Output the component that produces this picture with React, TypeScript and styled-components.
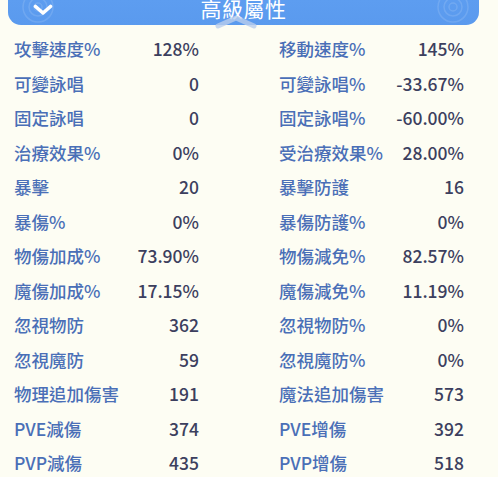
import React from "react";
import styled, { createGlobalStyle } from "styled-components";

const Global = createGlobalStyle`
  html, body { margin: 0; padding: 0; background: #fdfdf3; }
  body { font-family: "Noto Sans CJK TC", "Noto Sans", sans-serif; }
`;

const Page = styled.div`
  width: 498px;
  height: 477px;
  overflow: hidden;
  background: #fdfdf3;
  position: relative;
`;

const Header = styled.div`
  position: relative;
  margin: 0 19px 0 8px;
  height: 25px;
  border-radius: 0 0 13px 13px;
  background: linear-gradient(180deg, #5d9df0 0%, #5a9aee 100%);
  display: flex;
  align-items: center;
  justify-content: center;
`;

const Title = styled.div`
  font-size: 21px;
  line-height: 21px;
  color: #ffffff;
  letter-spacing: 0.5px;
  margin-top: -9px;
`;

const Chevron = styled.svg`
  position: absolute;
  left: 25px;
  top: 4px;
`;

const Swirl = styled.svg<{ $side: "left" | "right" }>`
  position: absolute;
  top: -10px;
  ${(p) => (p.$side === "left" ? "left: 10px;" : "right: 6px;")}
  opacity: 0.12;
`;

const Caret = styled.svg`
  position: absolute;
  left: 205px;
  top: 15px;
`;

const Grid = styled.div`
  display: grid;
  grid-template-columns: 185px 185px;
  column-gap: 80px;
  padding: 7px 0 0 14px;
`;

const Cell = styled.div`
  display: flex;
  justify-content: space-between;
  align-items: center;
  height: 34.5px;
  font-size: 17.5px;
  line-height: 34.5px;
  white-space: nowrap;
`;

const Label = styled.span`
  color: #4a6fb7;
  font-weight: 500;
`;

const Value = styled.span`
  color: #3c3f5e;
  font-weight: 500;
`;

const rows: [string, string, string, string][] = [
  ["攻擊速度%", "128%", "移動速度%", "145%"],
  ["可變詠唱", "0", "可變詠唱%", "-33.67%"],
  ["固定詠唱", "0", "固定詠唱%", "-60.00%"],
  ["治療效果%", "0%", "受治療效果%", "28.00%"],
  ["暴擊", "20", "暴擊防護", "16"],
  ["暴傷%", "0%", "暴傷防護%", "0%"],
  ["物傷加成%", "73.90%", "物傷減免%", "82.57%"],
  ["魔傷加成%", "17.15%", "魔傷減免%", "11.19%"],
  ["忽視物防", "362", "忽視物防%", "0%"],
  ["忽視魔防", "59", "忽視魔防%", "0%"],
  ["物理追加傷害", "191", "魔法追加傷害", "573"],
  ["PVE減傷", "374", "PVE增傷", "392"],
  ["PVP減傷", "435", "PVP增傷", "518"],
];

const SwirlIcon = ({ side }: { side: "left" | "right" }) => (
  <Swirl $side={side} width="40" height="34" viewBox="0 0 40 34">
    <g fill="none" stroke="#ffffff" strokeWidth="1.5">
      <circle cx="20" cy="17" r="15" />
      <circle cx="20" cy="17" r="9" />
      <circle cx="20" cy="17" r="4" />
    </g>
  </Swirl>
);

export default function App() {
  return (
    <Page>
      <Global />
      <Header>
        <SwirlIcon side="left" />
        <SwirlIcon side="right" />
        <Chevron width="20" height="12" viewBox="0 0 20 12">
          <polyline
            points="2.5,2.5 10,9 17.5,2.5"
            fill="none"
            stroke="#ffffff"
            strokeWidth="3.6"
            strokeLinecap="round"
            strokeLinejoin="round"
          />
        </Chevron>
        <Title>高級屬性</Title>
        <Caret width="46" height="14" viewBox="0 0 46 14">
          <polyline
            points="5,11 23,3 41,11"
            fill="none"
            stroke="#b9cdec"
            strokeOpacity="0.8"
            strokeWidth="5"
            strokeLinecap="round"
            strokeLinejoin="round"
          />
        </Caret>
      </Header>
      <Grid>
        {rows.map(([l1, v1, l2, v2]) => (
          <React.Fragment key={l1 + l2}>
            <Cell>
              <Label>{l1}</Label>
              <Value>{v1}</Value>
            </Cell>
            <Cell>
              <Label>{l2}</Label>
              <Value>{v2}</Value>
            </Cell>
          </React.Fragment>
        ))}
      </Grid>
    </Page>
  );
}
